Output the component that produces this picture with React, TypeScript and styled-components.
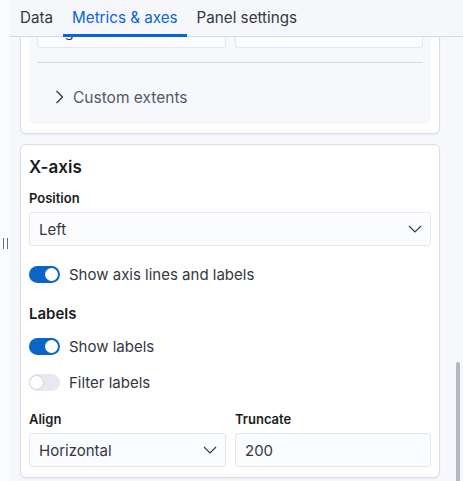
import React from "react";
import styled, { createGlobalStyle } from "styled-components";

const Global = createGlobalStyle`
  html, body { margin: 0; padding: 0; }
  body {
    font-family: Inter, "Noto Sans", "Liberation Sans", sans-serif;
    background: #f7f8fc;
    color: #343741;
    -webkit-font-smoothing: antialiased;
  }
  * { box-sizing: border-box; }
`;

const Page = styled.div`
  display: flex;
  width: 463px;
  height: 481px;
  overflow: hidden;
`;

const ResizeStrip = styled.div`
  width: 10px;
  flex: 0 0 10px;
  background: #fafbfd;
  display: flex;
  align-items: center;
  justify-content: center;
  padding-top: 6px;
`;

const Grip = styled.span`
  width: 5px;
  height: 11px;
  border-left: 1.5px solid #69707d;
  border-right: 1.5px solid #69707d;
`;

const Main = styled.div`
  flex: 1;
  display: flex;
  flex-direction: column;
  min-width: 0;
`;

const TabBar = styled.div`
  height: 37px;
  flex: 0 0 37px;
  display: flex;
  align-items: stretch;
  padding-left: 0.5px;
  background: #f5f7fa;
  border-bottom: 1px solid #d3dae6;
`;

const Tab = styled.div<{ $active?: boolean }>`
  display: flex;
  align-items: center;
  padding: 0 9.5px 2px;
  font-size: 15.2px;
  color: ${(p) => (p.$active ? "#0b64dd" : "#343741")};
  box-shadow: ${(p) => (p.$active ? "inset 0 -3px 0 #0b64dd" : "none")};
  margin-bottom: -1px;
`;

const Scroll = styled.div`
  flex: 1;
  position: relative;
  overflow: hidden;
  background: #f7f8fc;
`;

const ScrollContent = styled.div`
  margin-top: -24px;
  padding: 0 23px 0 10px;
  display: flex;
  flex-direction: column;
  gap: 10px;
`;

const ScrollThumb = styled.div`
  position: absolute;
  right: 3px;
  top: 325px;
  width: 4px;
  height: 130px;
  border-radius: 2px;
  background: #b5b9c1;
`;

const Card = styled.div<{ $pt?: number; $pb?: number }>`
  background: #fff;
  border: 1px solid #d8dde6;
  border-radius: 6px;
  box-shadow: 0 1px 2px rgba(0, 0, 0, 0.06);
  padding: ${(p) => p.$pt ?? 10}px 8px ${(p) => p.$pb ?? 10}px;
`;

const InnerPanel = styled.div`
  background: #f7f8fc;
  border-radius: 6px;
  padding: 0 8px;
`;

const FieldRow = styled.div`
  display: grid;
  grid-template-columns: 1fr 1fr;
  gap: 9px;
`;

const Input = styled.div`
  height: 34px;
  border: 1px solid #e3e6ed;
  border-radius: 3px;
  background: #fbfcfd;
  display: flex;
  align-items: center;
  justify-content: space-between;
  padding: 0 8px 0 9px;
  font-size: 15px;
  color: #343741;
`;

const Divider = styled.div`
  height: 1px;
  background: #d3dae6;
  margin-top: 14px;
`;

const AccordionRow = styled.div`
  height: 61px;
  padding: 7px 0 0 18px;
  display: flex;
  align-items: center;
  gap: 10px;
  font-size: 15.5px;
  color: #535966;
`;

const Title = styled.div`
  font-size: 17px;
  font-weight: 600;
  line-height: 24px;
  color: #1a1c21;
`;

const FieldLabel = styled.div<{ $mt?: number }>`
  font-size: 13px;
  font-weight: 600;
  line-height: 18px;
  color: #1a1c21;
  margin-top: ${(p) => p.$mt ?? 0}px;
  margin-bottom: 5px;
`;

const SubTitle = styled.div`
  font-size: 15px;
  font-weight: 600;
  line-height: 20px;
  color: #1a1c21;
  margin-top: 18px;
`;

const SwitchRow = styled.div<{ $mt: number }>`
  height: 24px;
  display: flex;
  align-items: center;
  gap: 9px;
  margin-top: ${(p) => p.$mt}px;
  font-size: 15px;
  color: #343741;
`;

const Track = styled.span<{ $on: boolean }>`
  position: relative;
  width: 31px;
  height: 17px;
  border-radius: 9px;
  background: ${(p) => (p.$on ? "#0b64c8" : "#e6e9ef")};
  flex: 0 0 31px;
`;

const Thumb = styled.span<{ $on: boolean }>`
  position: absolute;
  top: 2px;
  left: ${(p) => (p.$on ? "16px" : "1px")};
  width: 13px;
  height: 13px;
  border-radius: 50%;
  background: #fff;
  box-shadow: ${(p) => (p.$on ? "none" : "0 0 0 1px #d3d7de")};
`;

const Split = styled.div`
  display: grid;
  grid-template-columns: 197px 1fr;
  gap: 9px;
`;

const Chevron = () => (
  <svg width="14" height="8" viewBox="0 0 14 8" fill="none">
    <path d="M1 1l6 6 6-6" stroke="#343741" strokeWidth="1.1" />
  </svg>
);

const ChevronRight = () => (
  <svg width="8" height="14" viewBox="0 0 8 14" fill="none">
    <path d="M1.5 1l6 6-6 6" stroke="#343741" strokeWidth="1.3" />
  </svg>
);

const Switch = ({ on, label, mt }: { on: boolean; label: string; mt: number }) => (
  <SwitchRow $mt={mt}>
    <Track $on={on}>
      <Thumb $on={on} />
    </Track>
    {label}
  </SwitchRow>
);

export default function App() {
  return (
    <>
      <Global />
      <Page>
        <ResizeStrip>
          <Grip />
        </ResizeStrip>
        <Main>
          <TabBar>
            <Tab>Data</Tab>
            <Tab $active>Metrics &amp; axes</Tab>
            <Tab>Panel settings</Tab>
          </TabBar>
          <Scroll>
            <ScrollContent>
              <Card $pt={0} $pb={9}>
                <InnerPanel>
                  <FieldRow>
                    <Input>Log</Input>
                    <Input />
                  </FieldRow>
                  <Divider />
                  <AccordionRow>
                    <ChevronRight />
                    Custom extents
                  </AccordionRow>
                </InnerPanel>
              </Card>
              <Card>
                <Title>X-axis</Title>
                <FieldLabel $mt={10}>Position</FieldLabel>
                <Input>
                  Left
                  <Chevron />
                </Input>
                <Switch on label="Show axis lines and labels" mt={16} />
                <SubTitle>Labels</SubTitle>
                <Switch on label="Show labels" mt={10} />
                <Switch on={false} label="Filter labels" mt={12} />
                <Split>
                  <div>
                    <FieldLabel $mt={16}>Align</FieldLabel>
                    <Input>
                      Horizontal
                      <Chevron />
                    </Input>
                  </div>
                  <div>
                    <FieldLabel $mt={16}>Truncate</FieldLabel>
                    <Input>200</Input>
                  </div>
                </Split>
              </Card>
            </ScrollContent>
            <ScrollThumb />
          </Scroll>
        </Main>
      </Page>
    </>
  );
}
